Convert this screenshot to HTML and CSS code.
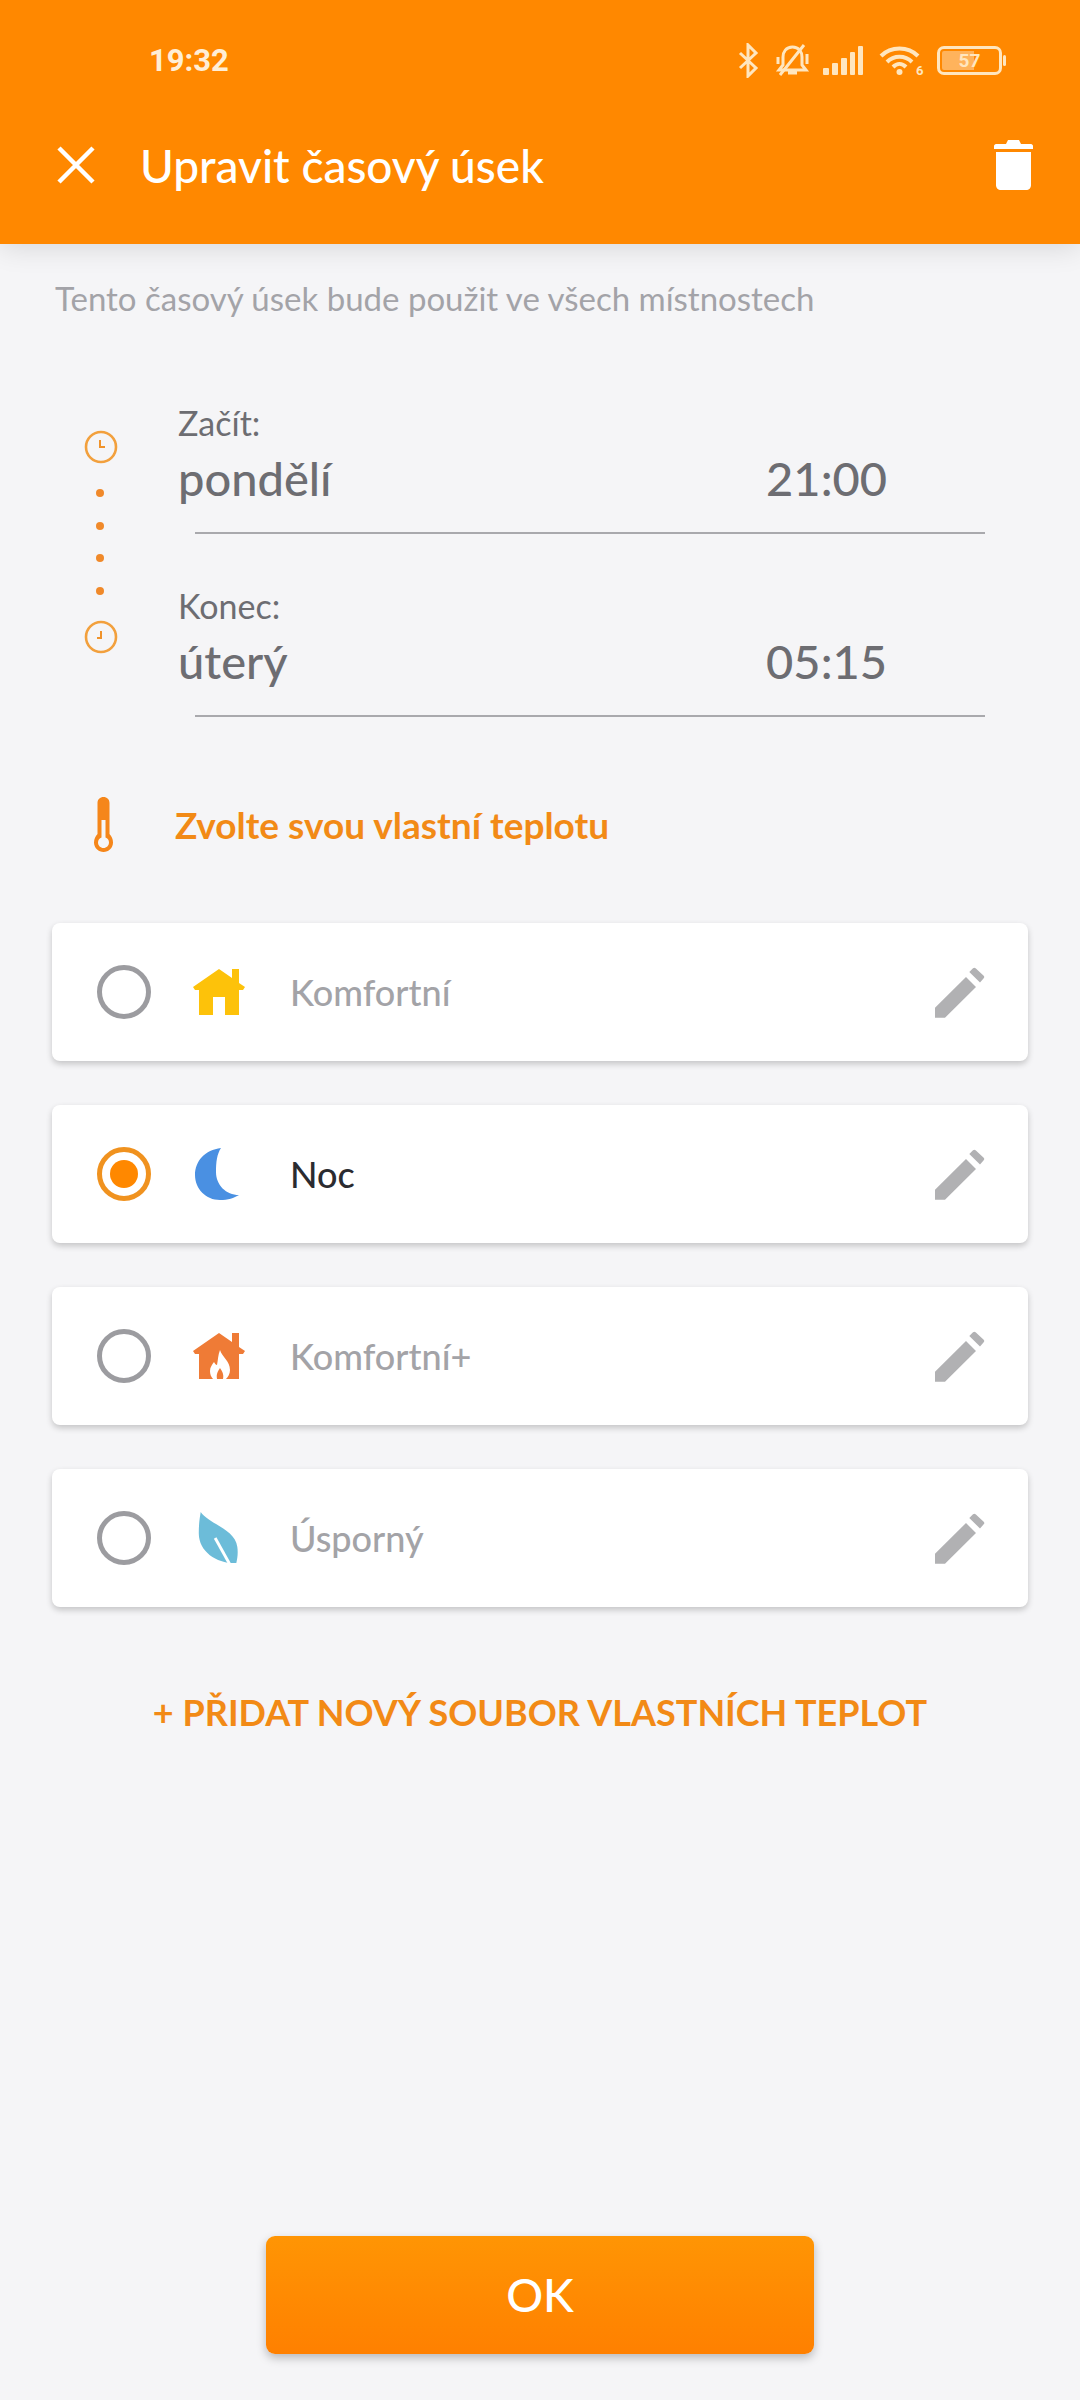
FILE: index.html
```html
<!doctype html>
<html lang="cs">
<head>
    <meta charset="UTF-8">
    <title>Upravit časový úsek</title>
    <link rel="stylesheet" href="styles.css">
</head>
<body>
<div class="app">
    <header class="head">
        <div class="statusbar">
            <span class="clockText">19:32</span>
            <div class="statusIcons">
                <svg class="icoBt" viewBox="0 0 21 35"><path d="M2 10 L18 25 L10 33 V2 L18 10 L2 25" fill="none" stroke="#ffe6bf" stroke-width="3"/></svg>
                <svg class="icoBell" viewBox="0 0 35 33"><path d="M17.5 3 C11 3 8 8 8 13 V21 L4 26 H31 L27 21 V13 C27 8 24 3 17.5 3 Z M13 29 H22" fill="none" stroke="#ffe6bf" stroke-width="3"/><path d="M3 13 V20 M32 10 V20 M5 31 L29 1" fill="none" stroke="#ffe6bf" stroke-width="3"/></svg>
                <svg class="icoSignal" viewBox="0 0 41 29"><g fill="#ffe6bf"><rect x="0" y="22" width="6" height="7" rx="1"/><rect x="9" y="17" width="6" height="12" rx="1"/><rect x="18" y="12" width="6" height="17" rx="1"/><rect x="27" y="6" width="5" height="23" rx="1"/><rect x="35" y="0" width="5" height="29" rx="1"/></g></svg>
                <svg class="icoWifi" viewBox="0 0 45 29"><g fill="none" stroke="#ffe6bf" stroke-width="4"><path d="M2 10 C12 0 29 0 39 10"/><path d="M8 16 C15 9 26 9 33 16"/><path d="M14 21 C18 17 23 17 27 21"/></g><circle cx="20.500" cy="26" r="3" fill="#ffe6bf"/><text x="37" y="29" class="wifiNum">6</text></svg>
                <div class="battery"><span>57</span></div>
                <i class="batteryNub"></i>
            </div>
        </div>
        <div class="toolbar">
            <svg class="icoClose" viewBox="0 0 38 38"><path d="M2 2 L36 36 M36 2 L2 36" stroke="#fff" stroke-width="4.500" fill="none"/></svg>
            <h1>Upravit časový úsek</h1>
            <svg class="icoTrash" viewBox="0 0 39 50"><path d="M14 0 H25 L27 4 H37 C38 4 39 5 39 6 V9 H0 V6 C0 5 1 4 2 4 H12 Z" fill="#fff"/><path d="M2 12 H37 V45 C37 48 35 50 32 50 H7 C4 50 2 48 2 45 Z" fill="#fff"/></svg>
        </div>
    </header>

    <main class="main">
        <p class="hint">Tento časový úsek bude použit ve všech místnostech</p>

        <section class="times">
            <div class="timeline">
                <svg class="icoClock" viewBox="0 0 34 34"><circle cx="17" cy="17" r="15" fill="none" stroke="#f2a03d" stroke-width="2.600"/><path d="M16 10 V17 H21" fill="none" stroke="#f0932b" stroke-width="2"/></svg>
                <i class="dot"></i>
                <i class="dot"></i>
                <i class="dot"></i>
                <i class="dot"></i>
                <svg class="icoClock" viewBox="0 0 34 34"><circle cx="17" cy="17" r="15" fill="none" stroke="#f2a03d" stroke-width="2.600"/><path d="M17 11 V18 H13" fill="none" stroke="#f0932b" stroke-width="2"/></svg>
            </div>
            <div class="fields">
                <div class="field">
                    <div class="fieldLabel">Začít:</div>
                    <div class="fieldValue"><span>pondělí</span><span>21:00</span></div>
                </div>
                <div class="field">
                    <div class="fieldLabel">Konec:</div>
                    <div class="fieldValue"><span>úterý</span><span>05:15</span></div>
                </div>
            </div>
        </section>

        <div class="tempTitle">
            <svg class="icoThermo" viewBox="0 0 19 55"><path d="M3.500 6 C3.500 2.500 6 0 9.500 0 C13 0 15.500 2.500 15.500 6 V37 C17.500 39 19 42 19 45.500 C19 51 14.500 55 9.500 55 C4.500 55 0 51 0 45.500 C0 42 1.500 39 3.500 37 Z" fill="#f5861a"/><path d="M7.500 23 H11.500 V40.500 C13.500 41 15 43 15 45.500 C15 48.500 12.500 51 9.500 51 C6.500 51 4 48.500 4 45.500 C4 43 5.500 41 7.500 40.500 Z" fill="#f5f5f7"/></svg>
            <span>Zvolte svou vlastní teplotu</span>
        </div>

        <ul class="cards">
            <li class="card">
                <i class="radio"></i>
                <svg class="icoMode" viewBox="0 0 52 46"><path d="M26 0 L39 9 V0 H46 V14 L52 18 L50 21 H46 V46 H32 V28 H20 V46 H6 V21 H2 L0 18 Z" fill="#fdc20a"/></svg>
                <span class="cardName">Komfortní</span>
                <svg class="icoEdit" viewBox="0 0 50 51"><path d="M0 40.700 L31 10 L41 20 L10 50.700 H0 Z M34.300 5 L38 1.300 Q39.300 0 40.600 1.300 L48.700 8.700 Q50 10 48.700 11.300 L45 15.500 Z" fill="#b1b1b3"/></svg>
            </li>
            <li class="card">
                <i class="radio on"></i>
                <svg class="icoMode" viewBox="0 0 52 52"><path d="M28 0 C12 2 2 13 2 27 C2 41 13 52 27 52 C35 52 41 50 46 47 C33 47 23 37 23 24 C23 14 24 6 28 0 Z" fill="#4a90e2"/></svg>
                <span class="cardName active">Noc</span>
                <svg class="icoEdit" viewBox="0 0 50 51"><path d="M0 40.700 L31 10 L41 20 L10 50.700 H0 Z M34.300 5 L38 1.300 Q39.300 0 40.600 1.300 L48.700 8.700 Q50 10 48.700 11.300 L45 15.500 Z" fill="#b1b1b3"/></svg>
            </li>
            <li class="card">
                <i class="radio"></i>
                <svg class="icoMode" viewBox="0 0 52 46"><path d="M26 0 L39 9 V0 H46 V14 L52 18 L50 21 H46 V46 H6 V21 H2 L0 18 Z" fill="#ef7b36"/><path d="M27 17 C29 24 37 28 37 37 C37 41 35 44 33 46 H20 C18 44 17 41 17 38 C17 34 19 32 21 29 C22 31 23 32 24 32 C25 27 25 22 27 17 Z" fill="#fff"/><path d="M27 35 C29 38 31 41 30 46 H24 C23 41 25 38 27 35 Z" fill="#ef7b36"/></svg>
                <span class="cardName">Komfortní+</span>
                <svg class="icoEdit" viewBox="0 0 50 51"><path d="M0 40.700 L31 10 L41 20 L10 50.700 H0 Z M34.300 5 L38 1.300 Q39.300 0 40.600 1.300 L48.700 8.700 Q50 10 48.700 11.300 L45 15.500 Z" fill="#b1b1b3"/></svg>
            </li>
            <li class="card">
                <i class="radio"></i>
                <svg class="icoMode" viewBox="0 0 52 54"><path d="M7 0 C15 12 43 18 45 36 C46 43 45 48 44 53 C25 54 5 42 5 22 C5 12 6 6 7 0 Z" fill="#6cbcd9"/><path d="M22 27 L37 54" stroke="#fff" stroke-width="3" fill="none"/></svg>
                <span class="cardName">Úsporný</span>
                <svg class="icoEdit" viewBox="0 0 50 51"><path d="M0 40.700 L31 10 L41 20 L10 50.700 H0 Z M34.300 5 L38 1.300 Q39.300 0 40.600 1.300 L48.700 8.700 Q50 10 48.700 11.300 L45 15.500 Z" fill="#b1b1b3"/></svg>
            </li>
        </ul>

        <a class="addLink" href="javascript:;">+ PŘIDAT NOVÝ SOUBOR VLASTNÍCH TEPLOT</a>

        <a class="okBtn" href="javascript:;">OK</a>
    </main>
</div>
</body>
</html>
```

FILE: styles.css
```css
*{
    margin:0;
    padding:0;
    list-style:none;
    box-sizing:border-box;
}
body{
    background:#f5f5f7;
    font-family:"Lato","Noto Sans",sans-serif;
}
a{
    text-decoration:none;
}
i{
    display:block;
}
.app{
    height:2400px;
    display:flex;
    flex-direction:column;
}

/* header */
.head{
    height:244px;
    background:#ff8800;
    box-shadow:0 4px 26px rgba(0,0,0,.12);
}
.statusbar{
    height:120px;
    display:flex;
    justify-content:space-between;
    align-items:center;
    padding:0 74px 0 149px;
}
.clockText{
    font-family:"Roboto",sans-serif;
    font-size:31px;
    font-weight:700;
    color:#ffeed6;
}
.statusIcons{
    display:flex;
    align-items:center;
}
.icoBt{
    width:21px;
    height:35px;
    margin-right:16px;
}
.icoBell{
    width:35px;
    height:33px;
    margin-right:13px;
}
.icoSignal{
    width:41px;
    height:29px;
    margin-right:15px;
}
.icoWifi{
    width:45px;
    height:29px;
    margin-right:13px;
}
.wifiNum{
    font-family:"Roboto",sans-serif;
    font-size:13px;
    font-weight:700;
    fill:#ffe6bf;
}
.battery{
    width:65px;
    height:29px;
    border:3px solid #ffe6bf;
    border-radius:7px;
    background:linear-gradient(90deg,#ffb35c 0,#ffb35c 57%,transparent 57%);
    background-clip:content-box;
    padding:2px;
    display:flex;
    align-items:center;
    justify-content:center;
}
.battery span{
    font-family:"Roboto",sans-serif;
    font-size:19px;
    font-weight:700;
    color:#ffe6bf;
}
.batteryNub{
    width:3px;
    height:11px;
    margin-left:1px;
    background:#ffe6bf;
    border-radius:2px;
}
.toolbar{
    height:90px;
    display:flex;
    align-items:center;
    padding:0 47px 0 57px;
}
.icoClose{
    width:38px;
    height:38px;
    margin-right:45px;
}
.toolbar h1{
    flex:1;
    font-size:46px;
    font-weight:500;
    color:#fff;
}
.icoTrash{
    width:39px;
    height:50px;
}

/* body */
.main{
    flex:1;
    display:flex;
    flex-direction:column;
    padding-top:34px;
}
.hint{
    height:40px;
    line-height:40px;
    margin-left:55px;
    font-size:33px;
    color:#a3a3a8;
}

.times{
    display:flex;
    margin-top:85px;
    padding-left:84px;
}
.timeline{
    width:34px;
    height:224px;
    margin-top:27px;
    display:flex;
    flex-direction:column;
    justify-content:space-between;
    align-items:center;
}
.icoClock{
    width:34px;
    height:34px;
}
.dot{
    width:8px;
    height:8px;
    margin-left:-2px;
    border-radius:50%;
    background:#f0892a;
}
.fields{
    margin-left:60px;
    width:807px;
}
.field{
    position:relative;
    height:130px;
    margin-bottom:53px;
    color:#6d6d72;
}
.field:last-child{
    margin-bottom:0;
}
.fieldLabel{
    height:40px;
    line-height:40px;
    font-size:34px;
}
.fieldValue{
    display:flex;
    justify-content:space-between;
    height:56px;
    margin-top:7px;
    line-height:56px;
    width:709px;
    font-size:47px;
    font-weight:500;
}
.field:after{
    content:"";
    display:block;
    height:1.500px;
    margin:26px 0 0 17px;
    background:#a9a9ad;
}

.tempTitle{
    display:flex;
    align-items:center;
    height:56px;
    margin-top:80px;
    padding-left:94px;
    font-size:37px;
    font-weight:700;
    color:#f28a16;
}
.icoThermo{
    width:19px;
    height:55px;
    margin-right:62px;
}

.cards{
    display:flex;
    flex-direction:column;
    gap:44px;
    margin:71px 52px 0;
}
.card{
    height:138px;
    display:flex;
    align-items:center;
    padding:0 43px 0 45px;
    background:#fff;
    border-radius:8px;
    box-shadow:0 3px 6px rgba(0,0,0,.2);
}
.radio{
    width:54px;
    height:54px;
    border:5px solid #9c9ca0;
    border-radius:50%;
}
.radio.on{
    border-color:#f0921f;
    background:#ff8800;
    background-clip:content-box;
    padding:8px;
}
.icoMode{
    width:52px;
    height:52px;
    margin-left:42px;
}
.cardName{
    flex:1;
    margin-left:45px;
    font-size:36px;
    font-weight:500;
    color:#a3a3a7;
}
.cardName.active{
    color:#2b2b30;
}
.icoEdit{
    width:50px;
    height:51px;
}

.addLink{
    display:block;
    height:44px;
    line-height:44px;
    margin-top:83px;
    text-align:center;
    font-size:36px;
    font-weight:700;
    color:#f28a16;
}
.okBtn{
    display:block;
    width:548px;
    height:118px;
    margin:auto auto 46px;
    line-height:118px;
    text-align:center;
    font-size:46px;
    font-weight:500;
    color:#fff;
    border-radius:9px;
    background:linear-gradient(180deg,#ff9504,#ff8000);
    box-shadow:0 4px 10px rgba(0,0,0,.25);
}
```
